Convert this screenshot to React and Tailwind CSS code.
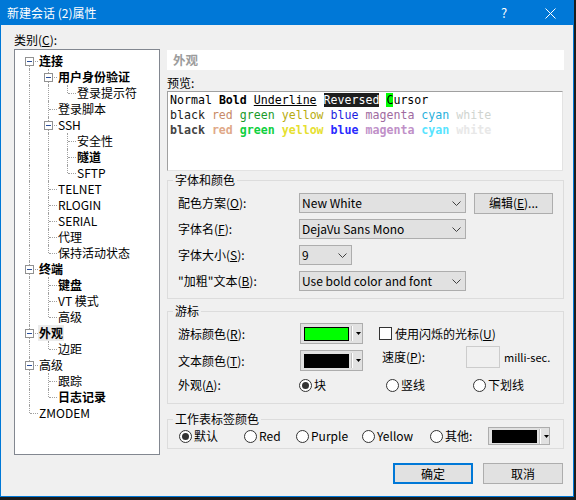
const tree = [
  { t: "连接", d: 0, c: "first", g: [], box: true, b: true },
  { t: "用户身份验证", d: 1, c: "mid", g: [1], box: true, b: true },
  { t: "登录提示符", d: 2, c: "last", g: [1, 1] },
  { t: "登录脚本", d: 1, c: "mid", g: [1] },
  { t: "SSH", d: 1, c: "mid", g: [1], box: true },
  { t: "安全性", d: 2, c: "mid", g: [1, 1] },
  { t: "隧道", d: 2, c: "mid", g: [1, 1], b: true },
  { t: "SFTP", d: 2, c: "last", g: [1, 1] },
  { t: "TELNET", d: 1, c: "mid", g: [1] },
  { t: "RLOGIN", d: 1, c: "mid", g: [1] },
  { t: "SERIAL", d: 1, c: "mid", g: [1] },
  { t: "代理", d: 1, c: "mid", g: [1] },
  { t: "保持活动状态", d: 1, c: "last", g: [1] },
  { t: "终端", d: 0, c: "mid", g: [], box: true, b: true },
  { t: "键盘", d: 1, c: "mid", g: [1], b: true },
  { t: "VT 模式", d: 1, c: "mid", g: [1] },
  { t: "高级", d: 1, c: "last", g: [1] },
  { t: "外观", d: 0, c: "mid", g: [], box: true, b: true, sel: true },
  { t: "边距", d: 1, c: "last", g: [1] },
  { t: "高级", d: 0, c: "mid", g: [], box: true },
  { t: "跟踪", d: 1, c: "mid", g: [1] },
  { t: "日志记录", d: 1, c: "last", g: [1], b: true },
  { t: "ZMODEM", d: 0, c: "last", g: [] },
];

function Guide() {
  return (
    <div className="relative w-[19px] h-[16px] shrink-0">
      <div className="absolute left-[9px] top-0 h-[16px] border-l border-dotted border-[#a0a0a0]" />
    </div>
  );
}

function Connector({ kind, box }) {
  return (
    <div className="relative w-[19px] h-[16px] shrink-0">
      {kind === "mid" && <div className="absolute left-[9px] top-0 h-[16px] border-l border-dotted border-[#a0a0a0]" />}
      {kind === "last" && <div className="absolute left-[9px] top-0 h-[8px] border-l border-dotted border-[#a0a0a0]" />}
      {kind === "first" && <div className="absolute left-[9px] top-[8px] h-[8px] border-l border-dotted border-[#a0a0a0]" />}
      <div className="absolute left-[10px] top-[8px] w-[8px] border-t border-dotted border-[#a0a0a0]" />
      {box && (
        <div className="absolute left-[5px] top-[4px] w-[9px] h-[9px] border border-[#919191] bg-white">
          <div className="absolute left-[1px] top-[3px] w-[5px] h-[1px] bg-[#2a4e9a]" />
        </div>
      )}
    </div>
  );
}

function Tree() {
  return (
    <div className="w-[146px] h-[406px] mt-[1px] border border-[#828790] bg-white pl-[5px] pt-[3px]">
      {tree.map((n, i) => (
        <div key={i} className="flex h-[16px] items-center">
          {n.g.map((_, j) => (
            <Guide key={j} />
          ))}
          <Connector kind={n.c} box={n.box} />
          <span
            className={
              "leading-[16px] text-[12px] whitespace-nowrap " +
              (n.b ? "font-bold " : "") +
              (n.sel ? "bg-[#ebebeb] px-[1px] -ml-[1px]" : "")
            }
          >
            {n.t}
          </span>
        </div>
      ))}
    </div>
  );
}

function Chevron() {
  return (
    <svg width="9" height="5" viewBox="0 0 9 5" className="shrink-0">
      <polyline points="0.5,0.5 4.5,4.5 8.5,0.5" fill="none" stroke="#404040" strokeWidth="1" />
    </svg>
  );
}

function Select({ value, w }) {
  return (
    <div className={"flex items-center justify-between h-[20px] border border-[#adadad] bg-[#e1e1e1] pl-[2px] pr-[4px] " + w}>
      <span className="leading-[18px]">{value}</span>
      <Chevron />
    </div>
  );
}

function Tri() {
  return (
    <svg width="5" height="3" viewBox="0 0 5 3" className="shrink-0">
      <path d="M0 0h5l-2.5 3z" fill="#000" />
    </svg>
  );
}

function ColorBtn({ color, size, sw }) {
  return (
    <div className={"flex items-center border border-[#adadad] bg-[#e1e1e1] pl-[3px] shrink-0 " + size}>
      <div className={"border border-black " + sw + " " + color} />
      <div className="ml-[2px] w-[2px] h-[15px] border-l border-[#c0c0c0] bg-white" />
      <div className="ml-[3px]">
        <Tri />
      </div>
    </div>
  );
}

function Radio({ on }) {
  return (
    <span className="w-[13px] h-[13px] rounded-full border border-[#333333] bg-white flex items-center justify-center shrink-0">
      {on && <span className="w-[7px] h-[7px] rounded-full bg-[#333333]" />}
    </span>
  );
}

function RadioItem({ on, label, w }) {
  return (
    <div className={"flex items-center shrink-0 " + w}>
      <Radio on={on} />
      <span className="ml-[2px] leading-[16px]">{label}</span>
    </div>
  );
}

function Group({ title, children, className }) {
  return (
    <fieldset className={"border border-[#dcdcdc] " + className}>
      <legend className="ml-[5px] px-[2px] leading-[16px]">{title}</legend>
      {children}
    </fieldset>
  );
}

function Preview() {
  return (
    <div className="h-[80px] w-[396px] border border-[#a0a0a0] border-b-[#e3e3e3] border-r-[#e3e3e3] bg-white pl-[2px] pt-[1px] font-['DejaVu_Sans_Mono',monospace] text-[11.6px] leading-[15px] whitespace-pre">
      <div className="text-black">
        Normal <span className="font-bold">Bold</span> <span className="underline">Underline</span>{" "}
        <span className="bg-[#1e1e1e] text-white">Reversed</span> <span className="bg-[#00ff00]">C</span>ursor
      </div>
      <div>
        <span className="text-[#202020]">black</span> <span className="text-[#c88a68]">red</span>{" "}
        <span className="text-[#1a9a2a]">green</span> <span className="text-[#b8ac10]">yellow</span>{" "}
        <span className="text-[#1c1ce0]">blue</span> <span className="text-[#a06aa0]">magenta</span>{" "}
        <span className="text-[#28b0dc]">cyan</span> <span className="text-[#cfd4cf]">white</span>
      </div>
      <div className="font-bold">
        <span className="text-[#444444]">black</span> <span className="text-[#e0a888]">red</span>{" "}
        <span className="text-[#10d040]">green</span> <span className="text-[#e6e030]">yellow</span>{" "}
        <span className="text-[#2a2aff]">blue</span> <span className="text-[#c090c8]">magenta</span>{" "}
        <span className="text-[#58e4ff]">cyan</span> <span className="text-[#e8e8e8]">white</span>
      </div>
    </div>
  );
}

export default function App() {
  return (
    <div className="w-[576px] h-[500px] bg-[#1c1c1c] font-['Noto_Sans_CJK_SC','Liberation_Sans',sans-serif] text-[12px] text-black">
      <div className="w-[574px] h-[497px] border border-[#0078d7] bg-[#f0f0f0] flex flex-col">
        <div className="h-[24px] bg-[#0078d7] flex items-center text-white text-[12px] pl-[6px] shrink-0">
          <span className="flex-1 leading-[16px]">新建会话 (2)属性</span>
          <span className="w-[46px] text-center text-[13px] leading-[16px]">?</span>
          <span className="w-[46px] flex justify-center">
            <svg width="11" height="11" viewBox="0 0 11 11">
              <path d="M0.5 0.5L10.5 10.5M10.5 0.5L0.5 10.5" stroke="#fff" strokeWidth="1" />
            </svg>
          </span>
        </div>

        <div className="flex pl-[13px] pt-[7px]">
          <div className="w-[146px] shrink-0">
            <div className="leading-[16px]">
              类别(<span className="underline">C</span>):
            </div>
            <Tree />
          </div>

          <div className="ml-[7px] w-[397px] mt-[18px] flex flex-col">
            <div className="h-[20px] bg-white pl-[6px] leading-[20px] font-bold text-[12.5px] text-[#9c9c9c]">外观</div>
            <div className="mt-[4px] leading-[17px]">预览:</div>
            <Preview />

            <Group title="字体和颜色" className="mt-[1px]">
              <div className="px-[10px] pt-[5px] pb-[7px] flex flex-col gap-[6px]">
                <div className="flex items-center h-[20px]">
                  <span className="w-[121px]">配色方案(<span className="underline">O</span>):</span>
                  <Select value="New White" w="w-[167px]" />
                  <div className="ml-[8px] w-[79px] h-[21px] border border-[#adadad] bg-[#e1e1e1] flex items-center justify-center leading-[16px]">
                    编辑(<span className="underline">E</span>)...
                  </div>
                </div>
                <div className="flex items-center h-[20px]">
                  <span className="w-[121px]">字体名(<span className="underline">F</span>):</span>
                  <Select value="DejaVu Sans Mono" w="w-[167px]" />
                </div>
                <div className="flex items-center h-[20px]">
                  <span className="w-[121px]">字体大小(<span className="underline">S</span>):</span>
                  <Select value="9" w="w-[53px]" />
                </div>
                <div className="flex items-center h-[20px]">
                  <span className="w-[121px]">"加粗"文本(<span className="underline">B</span>):</span>
                  <Select value="Use bold color and font" w="w-[167px]" />
                </div>
              </div>
            </Group>

            <Group title="游标" className="mt-[4px]">
              <div className="px-[10px] pt-[4px] pb-[10px] flex flex-col gap-[6px]">
                <div className="flex items-center h-[21px]">
                  <span className="w-[122px]">游标颜色(<span className="underline">R</span>):</span>
                  <ColorBtn color="bg-[#00ff00]" size="w-[63px] h-[21px]" sw="w-[45px] h-[14px]" />
                  <span className="ml-[16px] w-[13px] h-[13px] border border-[#333333] bg-white shrink-0" />
                  <span className="ml-[3px] leading-[16px]">使用闪烁的光标(<span className="underline">U</span>)</span>
                </div>
                <div className="flex items-center h-[21px]">
                  <span className="w-[122px]">文本颜色(<span className="underline">T</span>):</span>
                  <ColorBtn color="bg-black" size="w-[63px] h-[21px]" sw="w-[45px] h-[14px]" />
                  <div className="-mt-[8px] flex items-center">
                    <span className="ml-[19px] w-[84px] leading-[16px]">速度(<span className="underline">P</span>):</span>
                    <span className="w-[34px] h-[22px] border border-[#cccccc] bg-[#f0f0f0]" />
                    <span className="ml-[4px] text-[11px] leading-[14px]">milli-sec.</span>
                  </div>
                </div>
                <div className="flex items-center h-[16px]">
                  <span className="w-[121px]">外观(<span className="underline">A</span>):</span>
                  <RadioItem on label="块" w="w-[87px]" />
                  <RadioItem label="竖线" w="w-[87px]" />
                  <RadioItem label="下划线" w="w-[80px]" />
                </div>
              </div>
            </Group>

            <Group title="工作表标签颜色" className="mt-[7px]">
              <div className="pl-[11px] pb-[3px] flex items-center h-[21px]">
                <RadioItem on label="默认" w="w-[65px]" />
                <RadioItem label="Red" w="w-[52px]" />
                <RadioItem label="Purple" w="w-[66px]" />
                <RadioItem label="Yellow" w="w-[68px]" />
                <RadioItem label="其他:" w="w-[58px]" />
                <ColorBtn color="bg-black" size="w-[62px] h-[18px]" sw="w-[46px] h-[13px]" />
              </div>
            </Group>

            <div className="mt-[14px] flex justify-end gap-[10px] pr-[1px]">
              <div className="w-[80px] h-[21px] border-2 border-[#0078d7] bg-[#e1e1e1] flex items-center justify-center leading-[16px]">
                确定
              </div>
              <div className="w-[80px] h-[21px] border border-[#adadad] bg-[#e1e1e1] flex items-center justify-center leading-[16px]">
                取消
              </div>
            </div>
          </div>
        </div>
      </div>
    </div>
  );
}
